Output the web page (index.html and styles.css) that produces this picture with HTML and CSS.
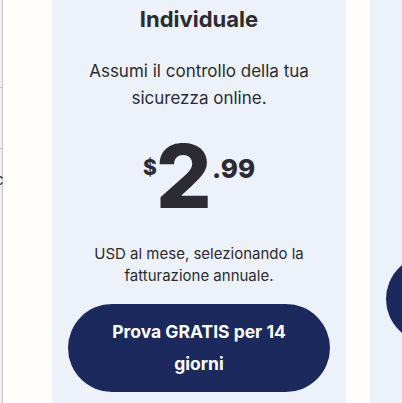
FILE: index.html
```html
<!DOCTYPE html>
<html lang="it">
<head>
  <meta charset="UTF-8" />
  <meta name="viewport" content="width=device-width, initial-scale=1.0"/>
  <title>Piani</title>
  <link rel="stylesheet" href="styles.css">
</head>
<body>

  <div class="plans">
    <div class="table-edge">
      <div class="edge-row"></div>
      <div class="edge-row"></div>
      <span class="edge-text">c</span>
    </div>

    <div class="card">
      <h2 class="plan-name">Individuale</h2>
      <p class="plan-desc">Assumi il controllo della tua sicurezza online.</p>
      <div class="price">
        <span class="currency">$</span>
        <span class="whole">2</span>
        <span class="cents">.99</span>
      </div>
      <p class="billing">USD al mese, selezionando la fatturazione annuale.</p>
      <button class="trial">Prova GRATIS per 14 giorni</button>
    </div>

    <div class="card">
      <h2 class="plan-name">Famiglia</h2>
      <p class="plan-desc">Fino a 6 persone protette.</p>
      <div class="price">
        <span class="currency">$</span>
        <span class="whole">4</span>
        <span class="cents">.99</span>
      </div>
      <p class="billing">USD al mese, annuale.</p>
      <button class="trial">Prova GRATIS per 14 giorni</button>
    </div>
  </div>

</body>
</html>
```

FILE: styles.css
```css
body {
  margin: 0;
  background-color: #fffefb;
  font-family: Inter, "Open Sans", sans-serif;
  color: #2b2b31;
  overflow: hidden;
}

.plans {
  display: flex;
  gap: 24px;
  height: 403px;
}

.table-edge {
  flex-shrink: 0;
  width: 2px;
  margin-right: 25px;
  background-color: #eeeef0;
  border-right: 1px solid #c6c6c9;
  padding-top: 87px;
  position: relative;
}

.edge-row {
  height: 60px;
  border-top: 1px solid #c6c6c9;
}

.edge-text {
  position: absolute;
  left: -5px;
  top: 170px;
  font-size: 15px;
}

.card {
  flex-shrink: 0;
  width: 262px;
  padding: 0 16px;
  background-color: #edf2fa;
  text-align: center;
}

.plan-name {
  margin: 5px 0 0;
  font-size: 22px;
  line-height: 28px;
  font-weight: 700;
}

.plan-desc {
  margin: 25px 0 0;
  font-size: 17px;
  line-height: 27px;
}

.price {
  display: flex;
  justify-content: center;
  align-items: flex-start;
  margin-top: 20px;
  font-weight: 800;
}

.currency {
  font-size: 21px;
  line-height: 1;
  margin-top: 25px;
  margin-right: -1px;
}

.whole {
  font-size: 88px;
  line-height: 88px;
}

.cents {
  font-size: 26px;
  line-height: 1;
  margin-top: 24px;
}

.billing {
  margin: 23px 20px 0;
  font-size: 15px;
  line-height: 22px;
}

.trial {
  width: 100%;
  margin-top: 17px;
  padding: 12px 36px;
  background-color: #1b295c;
  color: #fff;
  border: none;
  border-radius: 44px;
  font-family: inherit;
  font-size: 17.5px;
  line-height: 32px;
  font-weight: 700;
  cursor: pointer;
}
```
